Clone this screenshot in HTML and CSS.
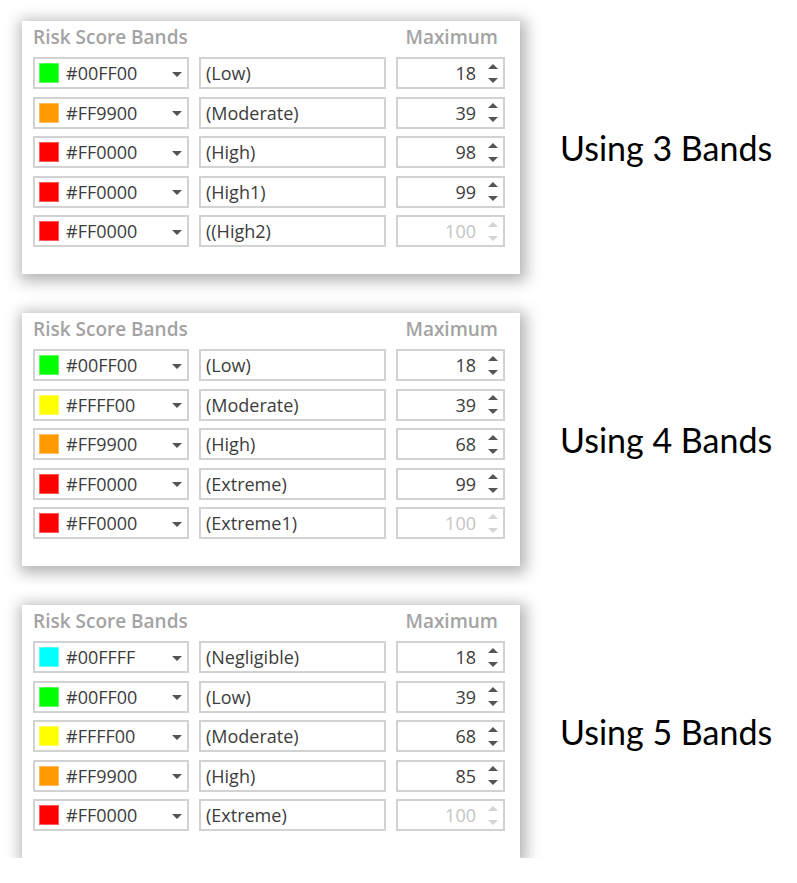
FILE: index.html
```html
<!DOCTYPE html>
<html lang="en">
<head>
    <meta charset="UTF-8">
    <title>Risk Score Bands</title>
    <link rel="stylesheet" href="styles.css">
</head>
<body>
    <div class="page">

        <!-- 3 bands -->
        <div class="group">
            <div class="panel">
                <div class="panel-head">
                    <span>Risk Score Bands</span>
                    <span>Maximum</span>
                </div>
                <div class="rows">
                    <div class="row">
                        <div class="select"><span class="swatch green"></span><span class="hex">#00FF00</span><span class="caret"></span></div>
                        <div class="textbox">(Low)</div>
                        <div class="number"><span class="value">18</span><span class="spin"><i class="up"></i><i class="down"></i></span></div>
                    </div>
                    <div class="row">
                        <div class="select"><span class="swatch orange"></span><span class="hex">#FF9900</span><span class="caret"></span></div>
                        <div class="textbox">(Moderate)</div>
                        <div class="number"><span class="value">39</span><span class="spin"><i class="up"></i><i class="down"></i></span></div>
                    </div>
                    <div class="row">
                        <div class="select"><span class="swatch red"></span><span class="hex">#FF0000</span><span class="caret"></span></div>
                        <div class="textbox">(High)</div>
                        <div class="number"><span class="value">98</span><span class="spin"><i class="up"></i><i class="down"></i></span></div>
                    </div>
                    <div class="row">
                        <div class="select"><span class="swatch red"></span><span class="hex">#FF0000</span><span class="caret"></span></div>
                        <div class="textbox">(High1)</div>
                        <div class="number"><span class="value">99</span><span class="spin"><i class="up"></i><i class="down"></i></span></div>
                    </div>
                    <div class="row">
                        <div class="select"><span class="swatch red"></span><span class="hex">#FF0000</span><span class="caret"></span></div>
                        <div class="textbox">((High2)</div>
                        <div class="number disabled"><span class="value">100</span><span class="spin"><i class="up"></i><i class="down"></i></span></div>
                    </div>
                </div>
            </div>
            <div class="label">Using 3 Bands</div>
        </div>

        <!-- 4 bands -->
        <div class="group">
            <div class="panel">
                <div class="panel-head">
                    <span>Risk Score Bands</span>
                    <span>Maximum</span>
                </div>
                <div class="rows">
                    <div class="row">
                        <div class="select"><span class="swatch green"></span><span class="hex">#00FF00</span><span class="caret"></span></div>
                        <div class="textbox">(Low)</div>
                        <div class="number"><span class="value">18</span><span class="spin"><i class="up"></i><i class="down"></i></span></div>
                    </div>
                    <div class="row">
                        <div class="select"><span class="swatch yellow"></span><span class="hex">#FFFF00</span><span class="caret"></span></div>
                        <div class="textbox">(Moderate)</div>
                        <div class="number"><span class="value">39</span><span class="spin"><i class="up"></i><i class="down"></i></span></div>
                    </div>
                    <div class="row">
                        <div class="select"><span class="swatch orange"></span><span class="hex">#FF9900</span><span class="caret"></span></div>
                        <div class="textbox">(High)</div>
                        <div class="number"><span class="value">68</span><span class="spin"><i class="up"></i><i class="down"></i></span></div>
                    </div>
                    <div class="row">
                        <div class="select"><span class="swatch red"></span><span class="hex">#FF0000</span><span class="caret"></span></div>
                        <div class="textbox">(Extreme)</div>
                        <div class="number"><span class="value">99</span><span class="spin"><i class="up"></i><i class="down"></i></span></div>
                    </div>
                    <div class="row">
                        <div class="select"><span class="swatch red"></span><span class="hex">#FF0000</span><span class="caret"></span></div>
                        <div class="textbox">(Extreme1)</div>
                        <div class="number disabled"><span class="value">100</span><span class="spin"><i class="up"></i><i class="down"></i></span></div>
                    </div>
                </div>
            </div>
            <div class="label">Using 4 Bands</div>
        </div>

        <!-- 5 bands -->
        <div class="group">
            <div class="panel">
                <div class="panel-head">
                    <span>Risk Score Bands</span>
                    <span>Maximum</span>
                </div>
                <div class="rows">
                    <div class="row">
                        <div class="select"><span class="swatch cyan"></span><span class="hex">#00FFFF</span><span class="caret"></span></div>
                        <div class="textbox">(Negligible)</div>
                        <div class="number"><span class="value">18</span><span class="spin"><i class="up"></i><i class="down"></i></span></div>
                    </div>
                    <div class="row">
                        <div class="select"><span class="swatch green"></span><span class="hex">#00FF00</span><span class="caret"></span></div>
                        <div class="textbox">(Low)</div>
                        <div class="number"><span class="value">39</span><span class="spin"><i class="up"></i><i class="down"></i></span></div>
                    </div>
                    <div class="row">
                        <div class="select"><span class="swatch yellow"></span><span class="hex">#FFFF00</span><span class="caret"></span></div>
                        <div class="textbox">(Moderate)</div>
                        <div class="number"><span class="value">68</span><span class="spin"><i class="up"></i><i class="down"></i></span></div>
                    </div>
                    <div class="row">
                        <div class="select"><span class="swatch orange"></span><span class="hex">#FF9900</span><span class="caret"></span></div>
                        <div class="textbox">(High)</div>
                        <div class="number"><span class="value">85</span><span class="spin"><i class="up"></i><i class="down"></i></span></div>
                    </div>
                    <div class="row">
                        <div class="select"><span class="swatch red"></span><span class="hex">#FF0000</span><span class="caret"></span></div>
                        <div class="textbox">(Extreme)</div>
                        <div class="number disabled"><span class="value">100</span><span class="spin"><i class="up"></i><i class="down"></i></span></div>
                    </div>
                </div>
            </div>
            <div class="label">Using 5 Bands</div>
        </div>

    </div>
</body>
</html>
```

FILE: styles.css
```css
* {
    margin: 0;
    padding: 0;
    box-sizing: border-box;
}

body {
    background-color: #ffffff;
    font-family: 'Open Sans', sans-serif;
    color: #3c3c3c;
}

.page {
    display: flex;
    flex-direction: column;
    gap: 39px;
    padding: 21px 0 0 22px;
}

.group {
    display: flex;
    align-items: center;
    gap: 40px;
}

/* Panel */
.panel {
    width: 498px;
    background-color: #ffffff;
    padding: 4px 15px 27px 11px;
    box-shadow: 2px 3px 14px 4px rgba(0, 0, 0, 0.3);
}

.panel-head {
    display: flex;
    justify-content: space-between;
    padding-right: 7px;
    margin-bottom: 8px;
    font-size: 19px;
    line-height: 24px;
    font-weight: 600;
    color: #a3a3a3;
}

.rows {
    display: flex;
    flex-direction: column;
    gap: 7.5px;
}

.row {
    display: flex;
    gap: 10px;
    font-size: 18px;
}

.select,
.textbox,
.number {
    height: 32px;
    border: 2px solid #d2d2d2;
    display: flex;
    align-items: center;
}

.select {
    width: 156px;
    padding: 0 5px 0 4px;
}

.swatch {
    width: 20px;
    height: 20px;
    margin-right: 7px;
    box-shadow: inset 0 0 0 1px rgba(255, 255, 255, 0.35);
}

.green { background-color: #00ff00; }
.orange { background-color: #ff9900; }
.red { background-color: #ff0000; }
.yellow { background-color: #ffff00; }
.cyan { background-color: #00ffff; }

.hex {
    flex-grow: 1;
}

.caret {
    width: 0;
    height: 0;
    margin-top: 2px;
    border-left: 5px solid transparent;
    border-right: 5px solid transparent;
    border-top: 5px solid #555555;
}

.textbox {
    width: 187px;
    padding-left: 5px;
}

.number {
    width: 109px;
    padding-right: 5px;
}

.value {
    flex-grow: 1;
    text-align: right;
    padding-right: 11px;
}

.spin {
    display: flex;
    flex-direction: column;
    gap: 9px;
    width: 11px;
    align-items: center;
}

.spin i {
    width: 0;
    height: 0;
    border-left: 5px solid transparent;
    border-right: 5px solid transparent;
}

.spin .up {
    border-bottom: 5px solid #555555;
}

.spin .down {
    border-top: 5px solid #555555;
}

.disabled .value {
    color: #c4c4c4;
}

.disabled .spin .up {
    border-bottom-color: #d4d4d4;
}

.disabled .spin .down {
    border-top-color: #d4d4d4;
}

/* Caption beside each panel */
.label {
    font-family: 'Lato', sans-serif;
    font-size: 34px;
    color: #000000;
}
```
